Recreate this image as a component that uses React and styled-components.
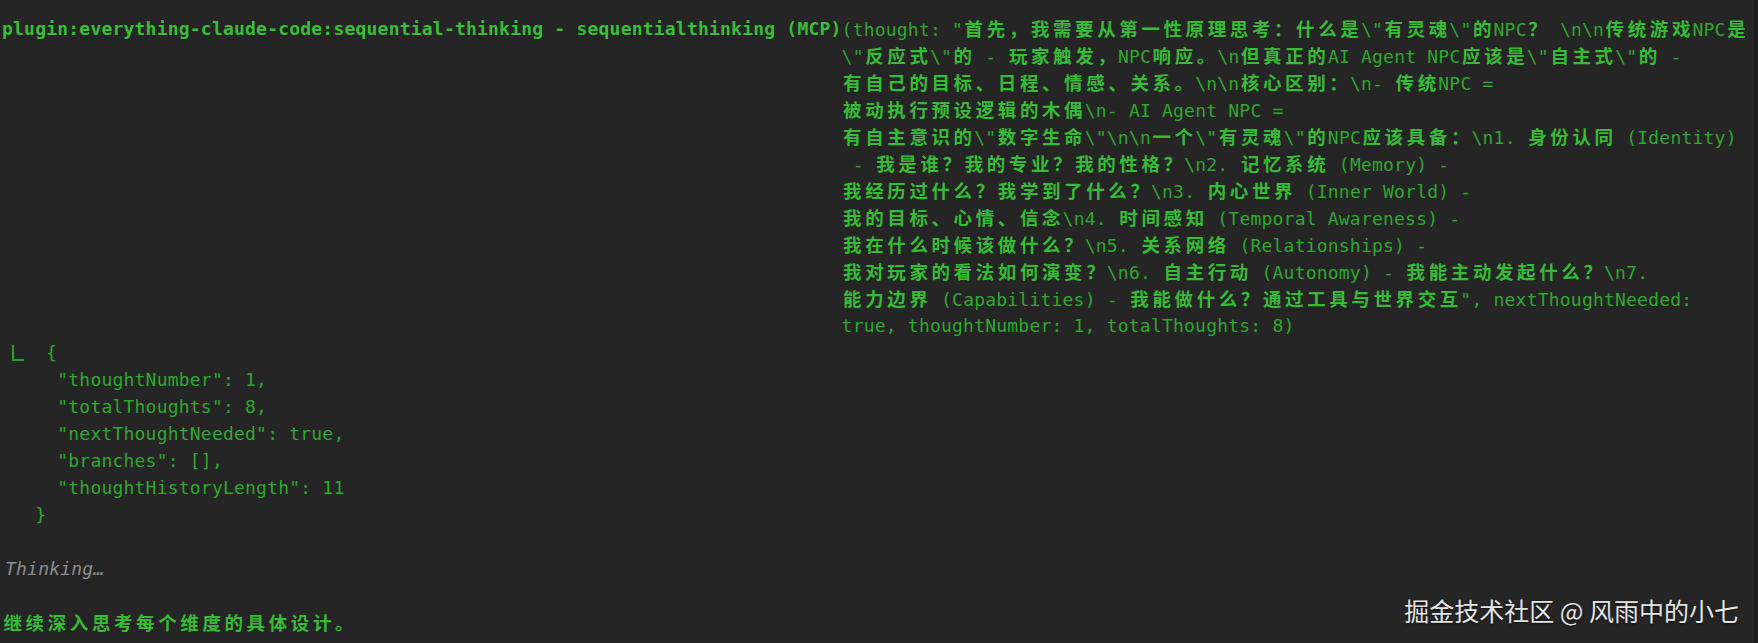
import React from "react";
import styled, { createGlobalStyle } from "styled-components";

const CELL = 11.05;
const CJK_SIZE = 18.5;

const Global = createGlobalStyle`
  html, body { margin: 0; padding: 0; background: #252525; }
  #root { width: 100%; }
`;

const Screen = styled.div`
  position: relative;
  box-sizing: border-box;
  width: 100%;
  height: 643px;
  overflow: hidden;
  background: #252525;
  border-right: 4px solid #1c1c1c;
  padding: 15px 0 0 2px;
  font-family: "DejaVu Sans Mono", "Liberation Mono", monospace;
  font-size: 18px;
  letter-spacing: 0.21px;
  color: #2fa82f;
`;

const Line = styled.div`
  height: 27px;
  line-height: 27px;
  white-space: pre;
  color: ${(p) => p.$color || "inherit"};
  font-style: ${(p) => (p.$italic ? "italic" : "normal")};
  padding-left: ${(p) => p.$indent || 0}px;
`;

const ToolCall = styled.div`
  display: flex;
  align-items: flex-start;
`;

const ToolName = styled.div`
  height: 27px;
  line-height: 27px;
  white-space: pre;
  font-weight: 700;
  color: #38bf38;
`;

const Args = styled.div`
  display: flex;
  flex-direction: column;
`;

const Wide = styled.span`
  font-family: "Noto Sans CJK SC", sans-serif;
  font-size: ${CJK_SIZE}px;
  font-weight: 700;
  color: #36bb36;
  letter-spacing: ${2 * CELL - CJK_SIZE}px;
  padding-left: 1.5px;
  margin-right: -1.5px;
`;

const Corner = styled.span`
  display: inline-block;
  box-sizing: border-box;
  width: 12px;
  height: 16px;
  margin: 0 0 0 10px;
  border-left: 2px solid #2c9c2c;
  border-bottom: 2px solid #2c9c2c;
  vertical-align: -2px;
`;

const Watermark = styled.div`
  position: absolute;
  right: 15px;
  bottom: 15px;
  font-family: "Noto Sans CJK SC", "Noto Sans", sans-serif;
  font-size: 25px;
  letter-spacing: 0;
  color: #e4e4e4;
  text-shadow: 0 1px 2px rgba(0, 0, 0, 0.6);
`;

const CJK_RE = /([\u3000-\u303f\u4e00-\u9fff\uff00-\uffef]+)/;

function Term({ text }) {
  const parts = text.split(CJK_RE);
  return parts.map((p, i) =>
    i % 2 === 1 ? <Wide key={i}>{p}</Wide> : <React.Fragment key={i}>{p}</React.Fragment>
  );
}

const argLines = [
  '(thought: "首先，我需要从第一性原理思考：什么是\\"有灵魂\\"的NPC？ \\n\\n传统游戏NPC是',
  '\\"反应式\\"的 - 玩家触发，NPC响应。\\n但真正的AI Agent NPC应该是\\"自主式\\"的 -',
  '有自己的目标、日程、情感、关系。\\n\\n核心区别：\\n- 传统NPC =',
  '被动执行预设逻辑的木偶\\n- AI Agent NPC =',
  '有自主意识的\\"数字生命\\"\\n\\n一个\\"有灵魂\\"的NPC应该具备：\\n1. 身份认同 (Identity)',
  ' - 我是谁？我的专业？我的性格？\\n2. 记忆系统 (Memory) -',
  '我经历过什么？我学到了什么？\\n3. 内心世界 (Inner World) -',
  '我的目标、心情、信念\\n4. 时间感知 (Temporal Awareness) -',
  '我在什么时候该做什么？\\n5. 关系网络 (Relationships) -',
  '我对玩家的看法如何演变？\\n6. 自主行动 (Autonomy) - 我能主动发起什么？\\n7.',
  '能力边界 (Capabilities) - 我能做什么？通过工具与世界交互", nextThoughtNeeded:',
  'true, thoughtNumber: 1, totalThoughts: 8)',
];

const resultLines = [
  '     "thoughtNumber": 1,',
  '     "totalThoughts": 8,',
  '     "nextThoughtNeeded": true,',
  '     "branches": [],',
  '     "thoughtHistoryLength": 11',
  '   }',
];

export default function App() {
  return (
    <>
      <Global />
      <Screen>
        <ToolCall>
          <ToolName>plugin:everything-claude-code:sequential-thinking - sequentialthinking (MCP)</ToolName>
          <Args>
            {argLines.map((l, i) => (
              <Line key={i}>
                <Term text={l} />
              </Line>
            ))}
          </Args>
        </ToolCall>
        <Line>
          <Corner />
          {"  {"}
        </Line>
        {resultLines.map((l, i) => (
          <Line key={i}>{l}</Line>
        ))}
        <Line />
        <Line $italic $color="#8e8e8e" $indent={3}>
          Thinking…
        </Line>
        <Line />
        <Line>
          <Term text="继续深入思考每个维度的具体设计。" />
        </Line>
        <Watermark>掘金技术社区 @ 风雨中的小七</Watermark>
      </Screen>
    </>
  );
}
